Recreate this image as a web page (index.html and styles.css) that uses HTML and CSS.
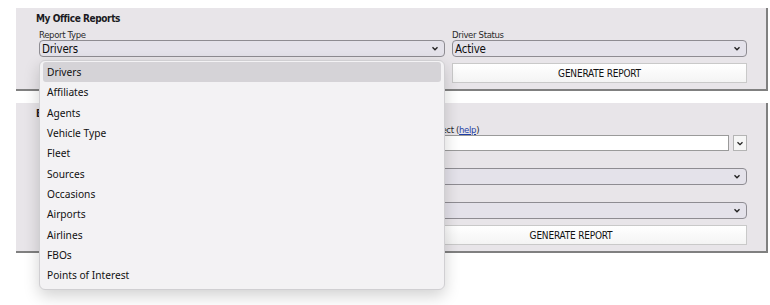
FILE: index.html
```html
<!DOCTYPE html>
<html>
<head>
  <title>My Office Reports</title>
  <link rel="stylesheet" href="styles.css">
</head>
<body>
  <div class="panel">
    <div class="panel-title">My Office Reports</div>
    <div class="grid grid-office">
      <div class="field">
        <label>Report Type</label>
        <div class="select">
          <span>Drivers</span>
          <svg class="chev" width="8" height="5" viewBox="0 0 8 5"><path d="M1.5 1.2 L4 3.7 L6.5 1.2" fill="none" stroke="#222" stroke-width="1.4"/></svg>
        </div>
      </div>
      <div class="field">
        <label>Driver Status</label>
        <div class="select">
          <span>Active</span>
          <svg class="chev" width="8" height="5" viewBox="0 0 8 5"><path d="M1.5 1.2 L4 3.7 L6.5 1.2" fill="none" stroke="#222" stroke-width="1.4"/></svg>
        </div>
        <button class="btn">GENERATE REPORT</button>
      </div>
    </div>
  </div>

  <div class="panel">
    <div class="panel-title">Billing Reports</div>
    <div class="grid grid-billing">
      <!-- left column sits under the open list -->
      <div class="field field-spaced">
        <div class="select"></div>
        <div class="input"></div>
        <div class="input"></div>
      </div>
      <div class="field">
        <label>Account Select (<a href="#">help</a>)</label>
        <div class="combo">
          <div class="input"></div>
          <div class="combo-btn">
            <svg width="8" height="5" viewBox="0 0 8 5"><path d="M1.5 1.2 L4 3.7 L6.5 1.2" fill="none" stroke="#222" stroke-width="1.3"/></svg>
          </div>
        </div>
        <label class="gap">Status</label>
        <div class="select">
          <span></span>
          <svg class="chev" width="8" height="5" viewBox="0 0 8 5"><path d="M1.5 1.2 L4 3.7 L6.5 1.2" fill="none" stroke="#222" stroke-width="1.4"/></svg>
        </div>
        <label class="gap">Format</label>
        <div class="select">
          <span></span>
          <svg class="chev" width="8" height="5" viewBox="0 0 8 5"><path d="M1.5 1.2 L4 3.7 L6.5 1.2" fill="none" stroke="#222" stroke-width="1.4"/></svg>
        </div>
        <button class="btn">GENERATE REPORT</button>
      </div>
    </div>
  </div>

  <!-- open list of the Report Type select -->
  <ul class="dropdown">
    <li class="active">Drivers</li>
    <li>Affiliates</li>
    <li>Agents</li>
    <li>Vehicle Type</li>
    <li>Fleet</li>
    <li>Sources</li>
    <li>Occasions</li>
    <li>Airports</li>
    <li>Airlines</li>
    <li>FBOs</li>
    <li>Points of Interest</li>
  </ul>
</body>
</html>
```

FILE: styles.css
```css
html {
  height: 305px;
}
body {
  margin: 0;
  padding: 8px 0 0 16px;
  min-height: 305px;
  box-sizing: border-box;
  background: #ffffff;
  font-family: "DejaVu Sans Condensed", "DejaVu Sans", sans-serif;
  color: #1e1e1e;
  position: relative;
}
.panel {
  width: 750px;
  background: #e8e5e9;
  border-right: 2px solid #808080;
  border-bottom: 2px solid #808080;
  padding: 4px 0 6px 0;
  margin-bottom: 12px;
}
.panel-title {
  font-size: 10px;
  font-weight: bold;
  letter-spacing: -0.4px;
  line-height: 14px;
  padding-left: 20px;
  color: #1a1a22;
}
.grid {
  display: grid;
  column-gap: 7px;
  padding-left: 23px;
  margin-top: 3px;
}
.grid-office {
  grid-template-columns: 406px 295px;
}
.grid-billing {
  grid-template-columns: 349px 352px;
}
.field {
  display: flex;
  flex-direction: column;
}
.field-spaced {
  padding-top: 11px;
  gap: 17px;
}
label {
  font-size: 9.5px;
  letter-spacing: -0.35px;
  line-height: 11px;
  color: #2a2a2a;
}
label.gap {
  margin-top: 6px;
}
label a {
  color: #1f3fa6;
}
.select {
  height: 17px;
  box-sizing: border-box;
  border: 1px solid #8e8c92;
  border-radius: 4px;
  background: #e4e2ea;
  display: flex;
  align-items: center;
  justify-content: space-between;
  padding: 0 5px 0 2px;
  font-size: 11.5px;
  letter-spacing: -0.2px;
  color: #0e0e0e;
}
.chev {
  flex: none;
}
.input {
  height: 16px;
  box-sizing: border-box;
  border: 1px solid #9a9a9a;
  background: #ffffff;
}
.combo {
  display: flex;
  gap: 4px;
}
.combo .input {
  flex: 1;
}
.combo-btn {
  width: 14px;
  height: 16px;
  box-sizing: border-box;
  border: 1px solid #b4b4b4;
  background: #f6f6f6;
  display: flex;
  align-items: center;
  justify-content: center;
}
.btn {
  margin-top: 6px;
  height: 20px;
  border: 1px solid #c9c9c9;
  background: linear-gradient(#ffffff, #f4f4f4);
  font-family: inherit;
  font-size: 10px;
  letter-spacing: -0.2px;
  color: #111111;
  padding: 0;
}
.dropdown {
  position: absolute;
  left: 39px;
  top: 60px;
  width: 406px;
  box-sizing: border-box;
  margin: 0;
  padding: 1px 3px 3px;
  list-style: none;
  background: #f3f2f4;
  border: 1px solid #d0cfd2;
  border-radius: 6px;
  box-shadow: 0 6px 16px rgba(0, 0, 0, 0.18);
  font-family: "Noto Sans", "Open Sans", sans-serif;
  font-size: 10.2px;
  color: #111111;
}
.dropdown li {
  height: 20.35px;
  line-height: 20.35px;
  padding-left: 4px;
  border-radius: 3px;
}
.dropdown li.active {
  background: #d5d3d7;
}
```
